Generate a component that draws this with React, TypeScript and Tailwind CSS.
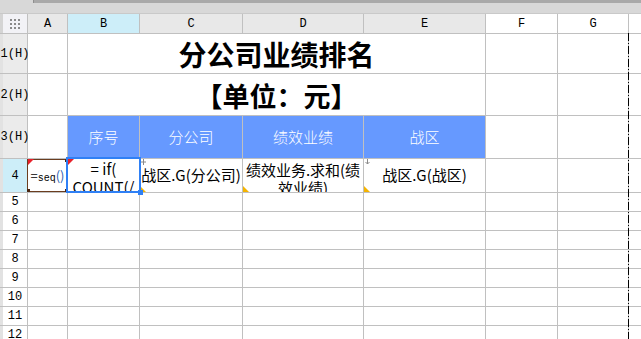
import React from "react";

const cjk = { fontFamily: '"Noto Sans CJK SC", "Noto Sans", sans-serif' };
const mono = { fontFamily: '"Liberation Mono", "DejaVu Sans Mono", monospace' };

const RedCorner = () => (
  <svg className="absolute left-0 top-0" width="6" height="6" viewBox="0 0 6 6">
    <polygon points="0,0 6,0 0,6" fill="#e8202a" />
  </svg>
);

const YellowCorner = () => (
  <svg className="absolute left-0 bottom-0" width="6" height="6" viewBox="0 0 6 6">
    <polygon points="0,0 6,6 0,6" fill="#f5b400" />
  </svg>
);

const RowHead = ({ label, bg = "bg-white" }: { label: string; bg?: string }) => (
  <div
    className={`${bg} border-l-[3px] border-[#e2e2e2] flex items-center justify-center text-[12px] text-black`}
    style={mono}
  >
    {label}
  </div>
);

const Blank = ({ className = "" }: { className?: string }) => <div className={`bg-white ${className}`} />;

export default function App() {
  const lower = ["5", "6", "7", "8", "9", "10", "11", "12", "13"];

  return (
    <div className="w-[641px] h-[339px] overflow-hidden bg-white flex flex-col">
      {/* top strip */}
      <div className="h-[14px] shrink-0 flex bg-[#d8d8d8] border-b border-[#c9c9c9]">
        <div className="w-[33px]" />
        <div className="flex-1 flex flex-col">
          <div className="h-[3px] bg-[#a9a9a9] border-l border-[#8f8f8f]" />
        </div>
      </div>

      <div className="relative flex-1 min-h-0 overflow-hidden">
        <div className="grid grid-cols-[27px_39px_71px_102px_120px_121px_71px_70px_1fr] grid-rows-[19px_39px_41px_42px_33px_repeat(9,18px)] gap-px bg-[#c0c0c0]">
          {/* column header */}
          <div className="bg-[#f2f2f6] border-l-[3px] border-[#d4d4d4] flex items-center justify-center">
            <div className="grid grid-cols-3 gap-[2px]">
              {Array.from({ length: 9 }).map((_, i) => (
                <div key={i} className="w-[2px] h-[2px] bg-[#8a8a8a]" />
              ))}
            </div>
          </div>
          {[
            ["A", "bg-[#e8e8e8]"],
            ["B", "bg-[#cdeef9]"],
            ["C", "bg-[#e8e8e8]"],
            ["D", "bg-[#e8e8e8]"],
            ["E", "bg-[#e8e8e8]"],
            ["F", "bg-white"],
            ["G", "bg-white"],
            ["", "bg-white"],
          ].map(([l, bg], i) => (
            <div key={i} className={`${bg} flex items-center justify-center text-[12px] text-black`} style={mono}>
              {l}
            </div>
          ))}

          {/* row 1 */}
          <RowHead label="1(H)" bg="bg-[#ebebeb]" />
          <Blank />
          <div className="col-span-4 bg-white flex items-center justify-center">
            <span className="text-[28px] font-bold text-black leading-none" style={cjk}>
              分公司业绩排名
            </span>
          </div>
          <Blank />
          <Blank />
          <Blank />

          {/* row 2 */}
          <RowHead label="2(H)" bg="bg-[#ebebeb]" />
          <Blank />
          <div className="col-span-4 bg-white flex items-center justify-center pt-[2px]">
            <span className="text-[27px] font-bold text-black leading-none" style={cjk}>
              【单位：元】
            </span>
          </div>
          <Blank />
          <Blank />
          <Blank />

          {/* row 3 */}
          <RowHead label="3(H)" bg="bg-[#ebebeb]" />
          <Blank />
          {["序号", "分公司", "绩效业绩", "战区"].map((t) => (
            <div key={t} className="bg-[#6699ff] flex items-center justify-center text-[15px] text-white font-light" style={cjk}>
              {t}
            </div>
          ))}
          <Blank />
          <Blank />
          <Blank />

          {/* row 4 */}
          <RowHead label="4" bg="bg-[#cdeef9]" />
          <div className="relative bg-white flex items-center justify-center">
            <div className="absolute inset-x-[-1px] inset-y-0 border border-[#6b3d1f]">
              <div className="absolute left-[-1px] bottom-[-1px] w-[3px] h-[3px] bg-[#4a2510]" />
              <div className="absolute right-[-1px] bottom-[-1px] w-[3px] h-[3px] bg-[#4a2510]" />
              <div className="absolute right-[-1px] top-[-1px] w-[3px] h-[3px] bg-[#4a2510]" />
            </div>
            <RedCorner />
            <span className="text-[13px] text-black leading-none mt-[2px]" style={cjk}>
              =<span className="text-[10px]" style={mono}>seq</span>
              <span className="text-[#2f5fb0]">()</span>
            </span>
          </div>
          <div className="relative bg-white z-10">
            <div className="absolute inset-0 overflow-hidden pt-[1px] text-center text-[15px] leading-[18px] text-black break-all" style={cjk}>
              <div>= if(</div>
              <div>COUNT(/</div>
            </div>
            <div className="absolute inset-x-[-2px] top-[-2px] bottom-[-1px] border-2 border-[#2f80f5]" />
            <div className="absolute right-[-4px] bottom-[-3px] w-[5px] h-[5px] bg-[#2f80f5]" />
            <RedCorner />
          </div>
          <div className="relative bg-white flex items-center justify-center overflow-hidden">
            <svg className="absolute left-[1px] top-0" width="5" height="6" viewBox="0 0 5 6">
              <path d="M2.5 0V6M0 3H5" stroke="#8a8a8a" strokeWidth="1" />
            </svg>
            <span className="text-[15px] text-black whitespace-nowrap" style={cjk}>
              战区.G(分公司)
            </span>
            <YellowCorner />
          </div>
          <div className="relative bg-white overflow-hidden">
            <div className="pt-[2px] px-[2px] text-center text-[15px] leading-[18px] text-black" style={cjk}>
              绩效业务.求和(绩效业绩)
            </div>
            <YellowCorner />
          </div>
          <div className="relative bg-white flex items-center justify-center overflow-hidden">
            <svg className="absolute left-[1px] top-0" width="5" height="6" viewBox="0 0 5 6">
              <path d="M2.5 0V5M0.5 3L2.5 5L4.5 3" stroke="#8a8a8a" strokeWidth="1" fill="none" />
            </svg>
            <span className="text-[15px] text-black whitespace-nowrap" style={cjk}>
              战区.G(战区)
            </span>
            <YellowCorner />
          </div>
          <Blank />
          <Blank />
          <Blank />

          {/* rows 5+ */}
          {lower.map((n) => (
            <React.Fragment key={n}>
              <RowHead label={n} />
              {Array.from({ length: 8 }).map((_, i) => (
                <Blank key={i} />
              ))}
            </React.Fragment>
          ))}
        </div>

        {/* page break line */}
        <svg className="absolute left-[628px] top-[19px]" width="1" height="320">
          <line x1="0.5" y1="0" x2="0.5" y2="320" stroke="#000" strokeWidth="1" strokeDasharray="8 2 1 2" />
        </svg>
      </div>
    </div>
  );
}
